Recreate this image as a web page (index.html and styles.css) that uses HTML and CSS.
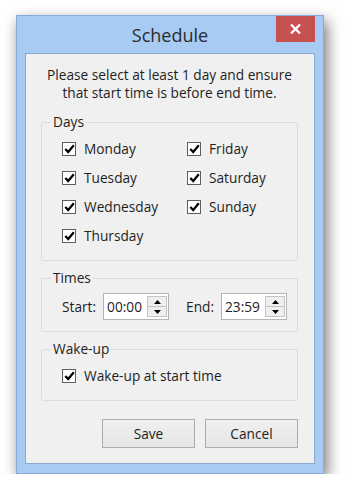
FILE: index.html
```html
<!DOCTYPE html>
<html lang="en">
<head>
  <meta charset="UTF-8">
  <title>Schedule</title>
  <link rel="stylesheet" href="styles.css">
</head>
<body>
  <div class="window">
    <div class="titlebar">
      <span class="title">Schedule</span>
      <button class="close-btn">
        <svg width="11" height="10" viewBox="0 0 11 10"><path d="M1 0.5 L10 9.5 M10 0.5 L1 9.5" stroke="#fff" stroke-width="2.2"/></svg>
      </button>
    </div>
    <div class="client">
      <p class="message">Please select at least 1 day and ensure<br>that start time is before end time.</p>

      <fieldset class="group days">
        <legend>Days</legend>
        <div class="day-grid">
          <label class="check"><span class="box"><svg width="11" height="10" viewBox="0 0 11 10"><path d="M1.3 5 L4.2 8 L9.8 1.2" fill="none" stroke="#000" stroke-width="2.2"/></svg></span>Monday</label>
          <label class="check"><span class="box"><svg width="11" height="10" viewBox="0 0 11 10"><path d="M1.3 5 L4.2 8 L9.8 1.2" fill="none" stroke="#000" stroke-width="2.2"/></svg></span>Friday</label>
          <label class="check"><span class="box"><svg width="11" height="10" viewBox="0 0 11 10"><path d="M1.3 5 L4.2 8 L9.8 1.2" fill="none" stroke="#000" stroke-width="2.2"/></svg></span>Tuesday</label>
          <label class="check"><span class="box"><svg width="11" height="10" viewBox="0 0 11 10"><path d="M1.3 5 L4.2 8 L9.8 1.2" fill="none" stroke="#000" stroke-width="2.2"/></svg></span>Saturday</label>
          <label class="check"><span class="box"><svg width="11" height="10" viewBox="0 0 11 10"><path d="M1.3 5 L4.2 8 L9.8 1.2" fill="none" stroke="#000" stroke-width="2.2"/></svg></span>Wednesday</label>
          <label class="check"><span class="box"><svg width="11" height="10" viewBox="0 0 11 10"><path d="M1.3 5 L4.2 8 L9.8 1.2" fill="none" stroke="#000" stroke-width="2.2"/></svg></span>Sunday</label>
          <label class="check"><span class="box"><svg width="11" height="10" viewBox="0 0 11 10"><path d="M1.3 5 L4.2 8 L9.8 1.2" fill="none" stroke="#000" stroke-width="2.2"/></svg></span>Thursday</label>
        </div>
      </fieldset>

      <fieldset class="group times">
        <legend>Times</legend>
        <div class="time-row">
          <span class="time-label">Start:</span>
          <div class="spin">
            <span class="spin-value">00:00</span>
            <span class="spin-btns">
              <span class="spin-btn"><svg width="7" height="4" viewBox="0 0 7 4"><path d="M0 4 L3.5 0 L7 4 Z" fill="#000"/></svg></span>
              <span class="spin-btn"><svg width="7" height="4" viewBox="0 0 7 4"><path d="M0 0 L3.5 4 L7 0 Z" fill="#000"/></svg></span>
            </span>
          </div>
          <span class="time-label end">End:</span>
          <div class="spin">
            <span class="spin-value">23:59</span>
            <span class="spin-btns">
              <span class="spin-btn"><svg width="7" height="4" viewBox="0 0 7 4"><path d="M0 4 L3.5 0 L7 4 Z" fill="#000"/></svg></span>
              <span class="spin-btn"><svg width="7" height="4" viewBox="0 0 7 4"><path d="M0 0 L3.5 4 L7 0 Z" fill="#000"/></svg></span>
            </span>
          </div>
        </div>
      </fieldset>

      <fieldset class="group wake">
        <legend>Wake-up</legend>
        <label class="check"><span class="box"><svg width="11" height="10" viewBox="0 0 11 10"><path d="M1.3 5 L4.2 8 L9.8 1.2" fill="none" stroke="#000" stroke-width="2.2"/></svg></span>Wake-up at start time</label>
      </fieldset>

      <div class="actions">
        <button class="btn">Save</button>
        <button class="btn">Cancel</button>
      </div>
    </div>
  </div>
</body>
</html>
```

FILE: styles.css
```css
body {
  margin: 0;
  background: #ffffff;
  font-family: 'Open Sans', 'Noto Sans', sans-serif;
  font-size: 13.7px;
  color: #1e1e1e;
}
.window {
  margin: 15px 0 0 16px;
  width: 308px;
  height: 459px;
  box-sizing: border-box;
  background: #a7cbf3;
  border: 1px solid #86a9d6;
  box-shadow: 3px 6px 14px rgba(0, 0, 0, 0.55);
  display: flex;
  flex-direction: column;
}
.titlebar {
  height: 37px;
  display: flex;
  align-items: flex-start;
  justify-content: center;
  position: relative;
}
.title {
  font-size: 18px;
  color: #2b2b2b;
  margin-top: 7px;
}
.close-btn {
  position: absolute;
  top: 0;
  right: 8px;
  width: 39px;
  height: 26px;
  border: none;
  background: #c75050;
  padding: 0;
  display: flex;
  align-items: center;
  justify-content: center;
}
.client {
  flex: 1;
  margin: 0 8px 9px 8px;
  background: #f0f0f0;
  border: 1px solid #8aa9cf;
  padding: 0 16px 0 15px;
  display: flex;
  flex-direction: column;
}
.message {
  margin: 12px 0 0;
  text-align: center;
  line-height: 18px;
}
.group {
  margin: 0;
  box-sizing: border-box;
  border: 1px solid #dcdcdc;
  border-radius: 2px;
  padding: 0 0 0 20px;
}
.group legend {
  padding: 0 2px;
  margin-left: -11px;
  line-height: 16px;
}
.days {
  margin-top: 12px;
  height: 147px;
}
.day-grid {
  display: grid;
  grid-template-columns: 125px 1fr;
  grid-auto-rows: 29px;
  margin-top: 4px;
}
.check {
  display: flex;
  align-items: center;
  gap: 8px;
}
.box {
  width: 14px;
  height: 14px;
  box-sizing: border-box;
  border: 1px solid #5e5e5e;
  background: #ffffff;
  display: flex;
  align-items: center;
  justify-content: center;
}
.times {
  margin-top: 9px;
  height: 62px;
  padding-left: 20px;
}
.time-row {
  display: flex;
  align-items: center;
  margin-top: 7px;
}
.time-label {
  margin-right: 7px;
}
.time-label.end {
  margin-left: 17px;
}
.spin {
  width: 66px;
  height: 27px;
  box-sizing: border-box;
  border: 1px solid #b4b4b4;
  background: #ffffff;
  display: flex;
  align-items: center;
  padding: 0 1px 0 3px;
}
.spin-value {
  flex: 1;
}
.spin-btns {
  display: flex;
  flex-direction: column;
  width: 18px;
  border: 1px solid #c4c4c4;
  background: #efefef;
}
.spin-btn {
  height: 9px;
  display: flex;
  align-items: center;
  justify-content: center;
}
.spin-btn + .spin-btn {
  border-top: 1px solid #c4c4c4;
}
.wake {
  margin-top: 9px;
  height: 60px;
}
.wake .check {
  margin-top: 9px;
}
.actions {
  display: flex;
  justify-content: flex-end;
  gap: 10px;
  margin-top: 18px;
}
.btn {
  width: 93px;
  height: 29px;
  border: 1px solid #acacac;
  background: linear-gradient(#f0f0f0, #e5e5e5);
  font-family: inherit;
  font-size: 13.7px;
  color: #1e1e1e;
  padding: 0;
}
```
